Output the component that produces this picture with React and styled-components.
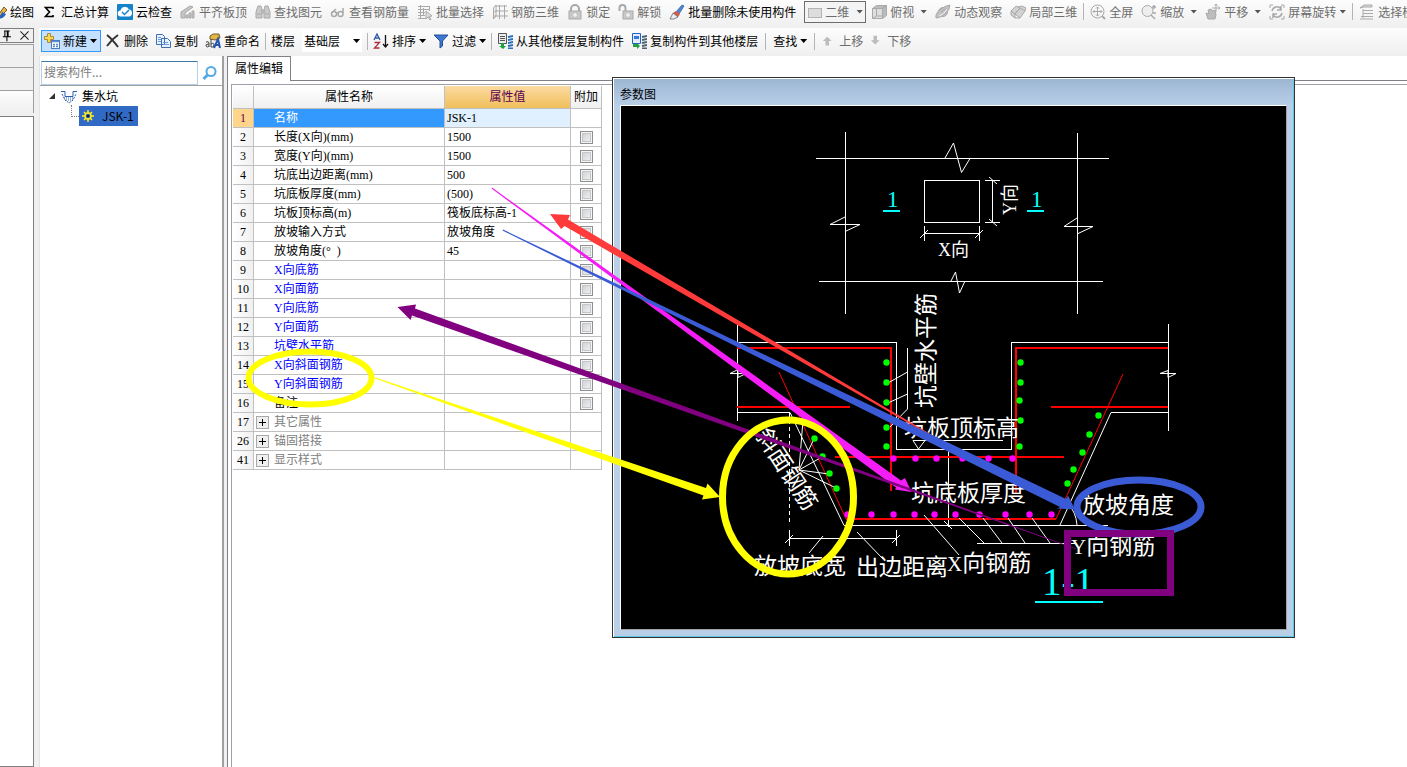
import React, { useState } from "react";
import styled, { createGlobalStyle } from "styled-components";

const GlobalStyle = createGlobalStyle`
    * {
        box-sizing: border-box;
    }
    body {
        margin: 0;
        overflow: hidden;
        background: #f0f0f0;
        font-family: "Noto Sans CJK SC", "Liberation Sans", sans-serif;
        font-size: 12px;
        line-height: 18px;
        color: #000;
    }
    button, input, select {
        font: inherit;
        color: inherit;
        margin: 0;
    }
`;

const Page = styled.div`
    position: relative;
    display: flex;
    flex-direction: column;
    height: 100vh;
    overflow: hidden;
`;

const Bar = styled.div`
    display: flex;
    align-items: center;
    height: 28px;
    white-space: nowrap;
    overflow: hidden;
    background: linear-gradient(#fdfdfd, #efefef);
`;

const ViewBar = styled(Bar)`
    gap: 8px;
    padding-bottom: 5px;
`;

const Bleed = styled.div`
    width: 1px;
    flex: none;
    margin-left: -18px;
`;

const EditBar = styled(Bar)`
    gap: 7px;
    padding-left: 2px;
    padding-bottom: 2px;
`;

const IconBox = styled.svg`
    flex: none;
`;

const ToolButton = styled.button`
    display: flex;
    align-items: center;
    flex: none;
    gap: 3px;
    height: 22px;
    padding: 0;
    border: 0;
    background: none;
    white-space: nowrap;
    color: ${(p) => (p.$dim ? "#6d6d6d" : "#000")};
`;

const NewButton = styled(ToolButton)`
    padding: 0 3px 0 2px;
    border: 1px solid #3399ff;
    background: #c4e1ff;
    margin-right: -3px;
`;

const Caret = styled.span`
    width: 7px;
    height: 4px;
    margin-left: ${(p) => (p.$wide ? 3 : 0)}px;
    background: ${(p) => (p.$dim ? "#555" : "#000")};
    clip-path: polygon(0 0, 100% 0, 50% 100%);
`;

const Separator = styled.span`
    flex: none;
    width: 1px;
    height: 17px;
    margin: 0 ${(p) => (p.$tight ? -2 : 0)}px;
    background: #b4b4b4;
`;

const Combo = styled.label`
    display: flex;
    align-items: center;
    flex: none;
    width: 60px;
    height: 22px;
    padding: 0 2px;
    gap: 2px;
    background: #fff;
`;

const ViewCombo = styled(Combo)`
    width: 62px;
    border: 1px solid #6e6e6e;
    background: #f4f4f4;
    color: #6d6d6d;
    margin-right: -3px;
`;

const Select = styled.select`
    appearance: none;
    flex: 1;
    min-width: 0;
    padding: 0;
    border: 0;
    outline: 0;
    background: none;
`;

const Main = styled.div`
    display: flex;
    flex: 1;
    min-height: 0;
`;

const Dock = styled.aside`
    width: 34px;
    margin-right: 5px;
    flex: none;
    display: flex;
    flex-direction: column;
`;

const DockHead = styled.div`
    display: flex;
    align-items: center;
    justify-content: flex-end;
    gap: 5px;
    height: 15px;
    margin-bottom: 1px;
    padding-right: 2px;
    border: 1px solid #808080;
    border-left: 0;
`;

const IconButton = styled.button`
    display: flex;
    align-items: center;
    justify-content: center;
    padding: 0;
    border: 0;
    background: none;
`;

const DockPane = styled.div`
    height: 23px;
    border: 1px solid #a0a0a0;
    border-left: 0;
    border-bottom: 0;
    background: ${(p) => (p.$light ? "linear-gradient(#fdfdfd, #efefef)" : "#f0f0f0")};
`;

const DockBody = styled.div`
    flex: 1;
    border: 1px solid #808080;
    border-left: 0;
    background: #fff;
    margin-top: 3px;
`;

const Work = styled.div`
    display: flex;
    flex-direction: column;
    flex: 1;
    min-width: 0;
`;

const Panels = styled.div`
    display: flex;
    flex: 1;
    min-height: 0;
`;

const TreePanel = styled.section`
    width: 185px;
    flex: none;
    margin-right: 3px;
    background: #fff;
    border-left: 1px solid #e4e4e4;
    border-right: 2px solid #a0a0a0;
`;

const SearchRow = styled.div`
    display: flex;
    align-items: center;
    height: 30px;
    padding-top: 4px;
    border-bottom: 1px solid #a0a0a0;
`;

const SearchBox = styled.input`
    width: 157px;
    height: 24px;
    margin-left: 1px;
    padding: 0 2px 2px;
    border: 1px solid #b5cfe7;
    border-top-color: #3d7bad;
    outline: 0;
    &::placeholder {
        color: #808080;
        opacity: 1;
    }
`;

const SearchButton = styled(IconButton)`
    flex: 1;
    height: 24px;
`;

const Tree = styled.ul`
    list-style: none;
    margin: 0;
    padding: 0 0 0 8px;
`;

const TreeNode = styled.li`
    display: flex;
    align-items: center;
    height: 20px;
    gap: 5px;
`;

const TreeLeaf = styled(TreeNode)`
    gap: 0;
    padding-left: 23px;
`;

const Elbow = styled.span`
    width: 8px;
    height: 12px;
    margin-bottom: 10px;
    border-left: 1px dotted #808080;
    border-bottom: 1px dotted #808080;
`;

const Selected = styled.span`
    display: flex;
    align-items: center;
    gap: 6px;
    height: 20px;
    padding: 0 4px 0 1px;
    background: #316ac5;
`;

const PropertyPanel = styled.section`
    display: flex;
    flex-direction: column;
    flex: 1;
    min-width: 0;
    border-left: 1px solid #808088;
    background: #fff;
`;

const TabRow = styled.div`
    display: flex;
    height: 25px;
    &::after {
        content: "";
        flex: 1;
        border-bottom: 1px solid #808088;
    }
`;

const Tab = styled.button`
    width: 63px;
    padding: 0 0 3px;
    border: 1px solid #808088;
    border-left: 0;
    border-bottom: 0;
    background: #fff;
`;

const GridFrame = styled.div`
    flex: 1;
    margin: 3px 0 0 3px;
    padding: 1px;
    border-top: 1px solid #a0a0a8;
    border-left: 1px solid #a0a0a8;
`;

const Grid = styled.table`
    width: 369px;
    table-layout: fixed;
    border-collapse: separate;
    border-spacing: 0;
    font-family: "Liberation Serif", "Noto Sans CJK SC", serif;
    line-height: 16px;
    th, td {
        height: 19px;
        padding: 0 2px;
        border-right: 1px solid #c0c0c0;
        border-bottom: 1px solid #c0c0c0;
        text-align: left;
        font-weight: normal;
        white-space: nowrap;
        overflow: hidden;
    }
`;

const ColumnHead = styled.th`
    && {
        height: 23px;
        padding: 0;
        text-align: center;
        color: ${(p) => (p.$active ? "#5a0050" : "#000")};
        background: ${(p) => (p.$active ? "linear-gradient(#fbdba2, #f1bf5b)" : "linear-gradient(#fff, #f0f0f0)")};
    }
`;

const RowHead = styled.th`
    && {
        padding: 0;
        text-align: center;
        color: ${(p) => (p.$active ? "#5a0050" : "#000")};
        background: ${(p) => (p.$active ? "#ffd58c" : "linear-gradient(90deg, #fff, #f0f0f0)")};
    }
`;

const nameColors = { plain: "#000", rebar: "#0000ff", group: "#808080", active: "#fff" };

const NameCell = styled.td`
    color: ${(p) => nameColors[p.$kind]};
    background: ${(p) => (p.$kind === "active" ? "#3399ff" : "#fff")};
`;

const NameLine = styled.div`
    display: flex;
    align-items: center;
    gap: 5px;
    padding-left: ${(p) => (p.$nested ? 18 : 0)}px;
    white-space: pre;
`;

const ValueCell = styled.td`
    background: ${(p) => (p.$active ? "#e0f0ff" : "#fff")};
`;

const CheckCell = styled.td`
    && {
        text-align: center;
        line-height: 0;
    }
`;

const Check = styled.input`
    appearance: none;
    width: 13px;
    height: 13px;
    border: 1px solid #8e8f8f;
    background: linear-gradient(135deg, #c8ccd2, #f6f6f6);
    box-shadow: inset 0 0 0 1px #f4f4f4, inset 0 0 0 2px #c4c6c8;
`;

const Expand = styled(IconButton)`
    width: 13px;
    height: 13px;
    border: 1px solid #a8a8a8;
    color: #000;
    background: #efefef;
`;

const Dialog = styled.section`
    position: absolute;
    left: 612px;
    top: 77px;
    width: 683px;
    padding: 0 7px 7px;
    border: 1px solid #333;
    background: linear-gradient(#9bb5d2, #b9cfe8 28px);
    box-shadow: inset 1px 1px 0 #fff, inset -1px -1px 0 #5cc8e8;
`;

const DialogTitle = styled.h2`
    height: 27px;
    margin: 0;
    padding-top: 7px;
    font-size: 12px;
    font-weight: normal;
`;

const Drawing = styled.svg`
    display: block;
    width: 667px;
    height: 525px;
    border: 1px solid #a0a0a0;
    border-top-color: #fff;
    border-left-color: #fff;
    background: #000;
    font-family: "Liberation Serif", "Noto Sans CJK SC", serif;
    font-size: 23px;
`;

const Markup = styled.svg`
    position: absolute;
    left: 0;
    top: 0;
    width: 100%;
    height: 100%;
    pointer-events: none;
`;

const gray = "#a9a9a9";

const icons = {
    pencil: (
        <g>
            <path d="M8 10l5-7 3 3-6 6z" fill="#e6b24c" stroke="#7a5a1c" />
            <path d="M6 14q6 2 9-4l-4-2q-1 4-5 6z" fill="#2a62b8" />
        </g>
    ),
    sigma: <path d="M11 5V3.500H3.500L7.500 8l-4 4.500H11V11" fill="none" stroke="#000" strokeWidth="1.600" />,
    cloud: (
        <g>
            <rect y="0" width="16" height="16" rx="1" fill="#1583cc" />
            <path d="M4 12.500a3 3 0 01-.5-6 4.500 4.500 0 018.500-1 3.600 3.600 0 01.5 7z" fill="#fff" />
            <path d="M5 8l2.500 2.500L12 6" fill="none" stroke="#1583cc" strokeWidth="1.500" />
        </g>
    ),
    slab: (
        <g fill="#c4c4c4" stroke={gray}>
            <path d="M1 8l9-6 3 1-8 6v5H1z" />
            <path d="M6 11h2v3H6zM9 9h2v5H9zM12 7h2v7h-2z" />
        </g>
    ),
    binoculars: (
        <g fill="#c9c9c9" stroke={gray}>
            <path d="M3 2h3l1 4v8H1V8zM10 2h3l2 6v6H9V6z" />
            <path d="M7 6h2v3H7zM2 10h4M10 10h4" />
        </g>
    ),
    glasses: (
        <g fill="none" stroke={gray} strokeWidth="1.500">
            <circle cx="4" cy="10" r="2.500" />
            <circle cx="10.500" cy="10" r="2.500" />
            <path d="M6 9h2M1.500 9L6 5M13 9V4" />
        </g>
    ),
    pick: (
        <g fill="none" stroke={gray}>
            <path d="M1 2.500h12M1 5.500h12M1 8.500h7M1 11.500h7M1 14.500h9M3.500 1v14M6.500 4v8M12.500 2v5" />
            <path d="M9 7l6 5-3 .5 2 3-1 .5-2-3-2 2z" fill="#ddd" />
        </g>
    ),
    mesh: <path d="M1.500 15V4L4 1v11zM4 2h11M4 7h12M1 12h15M7.500 1v14M12.500 1v14M1 9l4-3M1 15l3-3" fill="none" stroke={gray} />,
    lock: (
        <g fill="#c8c8c8" stroke={gray}>
            <path d="M4 7V5a4 4 0 018 0v2" fill="none" strokeWidth="2" />
            <rect x="2" y="7" width="12" height="8" />
            <path d="M8 9v4M6 11h4" stroke="#fff" />
        </g>
    ),
    unlock: (
        <g fill="#c8c8c8" stroke={gray}>
            <path d="M1.500 7V4a3 3 0 016 0v3" fill="none" strokeWidth="2" />
            <rect x="5" y="7" width="10" height="8" />
            <path d="M10 9v4M8 11h4" stroke="#fff" />
        </g>
    ),
    brush: (
        <g>
            <path d="M7 8l6-7 2 1-5 8z" fill="#4b8ad5" stroke="#295a9d" strokeWidth=".7" />
            <path d="M4 9l3-2 4 3-2 3z" fill="#d85a45" />
            <path d="M1 15l3-6 5 4q-4 3-8 2z" fill="#e8eef6" stroke="#555" strokeWidth=".7" />
        </g>
    ),
    plane: <rect x="1.500" y="4.500" width="13" height="9" fill="#ddd" stroke="#b4b4b4" />,
    cube: (
        <g fill="#dedede" stroke={gray}>
            <path d="M1.500 4.500h10v10h-10z" />
            <path d="M1.500 4.500l4-3h10l-4 3zM11.500 4.500l4-3v10l-4 3z" fill="#bbb" />
            <path d="M5.500 5v7h6M1.500 14.500l4-2.500" fill="none" />
        </g>
    ),
    orbit: (
        <g fill="#c2c2c2" stroke={gray}>
            <circle cx="8" cy="8" r="4.500" />
            <path d="M1 14Q0 9 6 5t9-4q0 5-5 9t-9 4zM6 8q3-3 6-3" />
            <path d="M4 12q5-1 8-7" stroke="#f2f2f2" fill="none" />
        </g>
    ),
    local: (
        <g fill="#d2d2d2" stroke={gray}>
            <path d="M1 7l5-5 4 2-5 6zM5 10l5-6 5 3-5 7zM1 7v4l4 3v-4M10 14l-5 0M8 3l4-1 4 2-1 3" />
        </g>
    ),
    extent: (
        <g fill="none" stroke={gray}>
            <circle cx="7.500" cy="7.500" r="6.500" />
            <path d="M12 12l3 3" strokeWidth="2" />
            <path d="M7.500 3v9M3 7.500h9M6 4.500L7.500 3 9 4.500M6 10.500L7.500 12 9 10.500M4.500 6L3 7.500 4.500 9M10.500 6L12 7.500 10.500 9" />
        </g>
    ),
    zoom: (
        <g fill="#eee" stroke={gray}>
            <circle cx="6.500" cy="7" r="5.500" />
            <path d="M10 11l4 4M13 1v4M11 3h4M12 9h3" strokeWidth="1.500" />
        </g>
    ),
    pan: (
        <g fill="#bdbdbd" stroke={gray}>
            <path d="M3 15l-2-6 3 1-1-4 3-1 1 2 3-1 1 5-1 4z" />
            <path d="M11 0v8M7 4h8M9.500 1.500L11 0l1.500 1.500M13.500 2.500L15 4l-1.500 1.500" fill="none" />
        </g>
    ),
    spin: (
        <g fill="none" stroke={gray}>
            <path d="M1 1h3M1 1v3M15 1h-3M15 1v3M1 15h3M1 15v-3M15 15h-3M15 15v-3" />
            <path d="M3 7a5 5 0 019-2M12 2v4H8M13 9a5 5 0 01-9 2M4 14v-4h4" strokeWidth="1.500" />
        </g>
    ),
    floors: <path d="M1 4l4-3h8v2H5zM4 5v9M4 6.500h10M4 9.500h10M2 12.500h12M1 15h13" fill="#ddd" stroke={gray} />,
    create: (
        <g>
            <rect x="7.500" y="7.500" width="8" height="8" fill="#fff" stroke="#4b79bd" />
            <path d="M7.500 8.500h8M9 11.500h2m1 0h2M9 13.500h2m1 0h2" stroke="#5c8bd2" strokeWidth="1.500" />
            <path d="M3.500.5h3v3h3v3h-3v3h-3v-3h-3v-3h3z" fill="#f8d94b" stroke="#a4771c" strokeWidth=".8" />
        </g>
    ),
    remove: <path d="M2 2q5 4 11 12M13 2Q7 6 2 13" fill="none" stroke="#333" strokeWidth="2" />,
    copy: (
        <g fill="#e8f1ff" stroke="#3f6fae">
            <path d="M1.500 1.500h6l2 2v8h-8zM6.500 5.500h6l3 3v6h-9z" />
            <path d="M3 4.500h3M3 6.500h3M3 8.500h3M8 9.500h5M8 11.500h6" stroke="#6d9add" />
        </g>
    ),
    rename: (
        <g>
            <path d="M5 3l3-2h6l1 4-5 2-5-1z" fill="#e3b648" stroke="#7b5b22" />
            <path d="M1 9q3-1 3 1v4M4 11q-4 0-3 2t3 0M6 6v8q3 1 3-2t-3-1" fill="none" stroke="#444" />
            <path d="M9 15l4-9 2 9M10 12h5" fill="none" stroke="#2457b4" strokeWidth="2" />
        </g>
    ),
    sort: (
        <g fill="none">
            <path d="M1 7l3-6 3 6M2 5h4" stroke="#2b59a9" strokeWidth="1.300" />
            <path d="M1.500 9.500h5L1.500 15h5" stroke="#aa2e3d" strokeWidth="1.300" />
            <path d="M12.500 2v12M10 11l2.500 3 2.500-3" stroke="#111" strokeWidth="1.300" />
        </g>
    ),
    filter: <path d="M1 2h14l-5.500 6v5L7 15V8z" fill="#3f76d2" stroke="#244f99" />,
    copyFrom: (
        <g>
            <path d="M1.500.5h8v10h-8z" fill="#ececec" stroke="#555" />
            <path d="M3 3.500h5M3 5.500h5M3 7.500h5" stroke="#555" />
            <path d="M11 4l5-1M11 7l5-1M11 10l5-1M11 13l5-1M11 15.500h5" stroke="#2871b8" strokeWidth="1.800" />
            <path d="M4 10v3H2l4 3 3-3H7v-3z" fill="#20a040" />
        </g>
    ),
    copyTo: (
        <g>
            <path d="M1.500.5h8v10h-8z" fill="#e3edff" stroke="#2461c1" />
            <path d="M3 3h5v3H3z" fill="#3678dc" />
            <path d="M11 4l5-1M11 7l5-1M11 10l5-1M11 13l5-1M11 15.500h5" stroke="#4f6274" strokeWidth="1.800" />
            <path d="M2 11v3h4v2l3-3-3-3v1z" fill="#20a040" />
        </g>
    ),
    up: <path d="M6 3l5 5H8v5H4V8H1z" fill="#bcbcbc" />,
    down: <path d="M4 2h4v5h3l-5 5-5-5h3z" fill="#bcbcbc" />,
    pin: <path d="M5 2.500h7M6 3v6M10 3v6M9 3v6M3.500 9.500h10M8.500 10v5" stroke="#000" strokeWidth="1.300" fill="none" />,
    close: <path d="M3 3l10 10M13 3L3 13" stroke="#222" strokeWidth="1.300" fill="none" />,
    search: (
        <g fill="none" stroke="#55a9e4" strokeWidth="2">
            <circle cx="9" cy="6.500" r="4.500" />
            <path d="M5.500 10L1.500 14" strokeWidth="3" />
        </g>
    ),
    pit: (
        <g fill="none" stroke="#2a5db0">
            <path d="M0 3.500h4v5h8v-5h4" />
            <path d="M1 6l3 6 4 3 4-3 3-6" strokeDasharray="2 1" />
            <path d="M3 10h10M5 12h7" strokeDasharray="1 1" />
        </g>
    ),
    gear: (
        <g fill="none" stroke="#ffee22" strokeWidth="1.500">
            <circle cx="8" cy="8" r="3" />
            <path d="M8 2v3M8 11v3M2 8h3M11 8h3M4 4l2 2M10 10l2 2M12 4l-2 2M6 10l-2 2" />
            <circle cx="8" cy="8" r="1.500" fill="#222" stroke="none" />
        </g>
    ),
};

const Icon = ({ name, size = 16 }) => (
    <IconBox width={size} height={size} viewBox="0 0 16 16" aria-hidden="true">{icons[name]}</IconBox>
);

const viewTools = [
    { icon: "pencil", text: "绘图" },
    { icon: "sigma", text: "汇总计算" },
    { icon: "cloud", text: "云检查" },
    { icon: "slab", text: "平齐板顶", dim: true },
    { icon: "binoculars", text: "查找图元", dim: true },
    { icon: "glasses", text: "查看钢筋量", dim: true },
    { icon: "pick", text: "批量选择", dim: true },
    { icon: "mesh", text: "钢筋三维", dim: true },
    { icon: "lock", text: "锁定", dim: true },
    { icon: "unlock", text: "解锁", dim: true },
    { icon: "brush", text: "批量删除未使用构件" },
];

const cameraTools = [
    { icon: "cube", text: "俯视", menu: true, wide: true },
    { icon: "orbit", text: "动态观察" },
    { icon: "local", text: "局部三维" },
    { split: true },
    { icon: "extent", text: "全屏" },
    { icon: "zoom", text: "缩放", menu: true, wide: true },
    { icon: "pan", text: "平移", menu: true, wide: true },
    { icon: "spin", text: "屏幕旋转", menu: true },
    { split: true },
    { icon: "floors", text: "选择楼层" },
];

const rows = [
    { no: 1, name: "名称", value: "JSK-1", kind: "active" },
    { no: 2, name: "长度(X向)(mm)", value: "1500" },
    { no: 3, name: "宽度(Y向)(mm)", value: "1500" },
    { no: 4, name: "坑底出边距离(mm)", value: "500" },
    { no: 5, name: "坑底板厚度(mm)", value: "(500)" },
    { no: 6, name: "坑板顶标高(m)", value: "筏板底标高-1" },
    { no: 7, name: "放坡输入方式", value: "放坡角度" },
    { no: 8, name: "放坡角度(°  )", value: "45" },
    { no: 9, name: "X向底筋", kind: "rebar" },
    { no: 10, name: "X向面筋", kind: "rebar" },
    { no: 11, name: "Y向底筋", kind: "rebar" },
    { no: 12, name: "Y向面筋", kind: "rebar" },
    { no: 13, name: "坑壁水平筋", kind: "rebar" },
    { no: 14, name: "X向斜面钢筋", kind: "rebar" },
    { no: 15, name: "Y向斜面钢筋", kind: "rebar" },
    { no: 16, name: "备注" },
    { no: 17, name: "其它属性", kind: "group" },
    { no: 26, name: "锚固搭接", kind: "group" },
    { no: 41, name: "显示样式", kind: "group" },
];

const greenDots = [
    [886, 362], [886, 382], [886, 402], [886, 427], [886, 446],
    [1020, 362], [1020, 382], [1019, 400], [1020, 420], [1019, 446],
    [803, 420], [814, 438], [822, 456], [829, 473], [836, 488],
    [1098, 415], [1089, 434], [1082, 452], [1073, 469], [1067, 483],
];

const pinkDots = [
    [893, 458], [915, 458], [936, 458], [962, 458], [988, 458], [1012, 458],
    [847, 514], [871, 514], [893, 514], [914, 514], [934, 514], [955, 514],
    [979, 514], [1005, 514], [1029, 514], [1051, 514],
];

const Dots = ({ points, color }) => (
    <g fill={color}>
        {points.map(([x, y]) => <circle key={`${x}-${y}`} cx={x + 0.5} cy={y + 0.5} r="3.2" />)}
    </g>
);

const PitDrawing = () => (
    <Drawing viewBox="621 106 665 523" role="img" aria-label="集水坑参数图">
        {/* plan */}
        <g fill="none" stroke="#fff" shapeRendering="crispEdges">
            <path d="M845.5 132V314M1077.500 133V314M816 158.500H1109M819 281.500H1103" />
            <path d="M924.500 180.500h55v42h-55z" />
            <path d="M924.500 233.500h55M924.500 226v15M979.500 226v15M992.500 180.500v42M985 180.500h15M985 222.500h15" />
            <path d="M830 224.500h30M1064 226.500h29" />
        </g>
        <g fill="none" stroke="#fff">
            <path d="M945 158l8.500-15 8 29.500 8.500-14M951 281l4.500-9 4 21 5.500-12" />
            <path d="M830 224.500l15-7.500M845 231.500l15-7M1064 226.500l13-8.500M1077 234l16-7.500" />
            <path d="M920 238l8-8M975 238l8-8M989 177l8 7M989 219l8 7" />
        </g>
        {/* section outline */}
        <g fill="none" stroke="#fff" shapeRendering="crispEdges">
            <path d="M737.500 325V421M737 342.500H896.500V449.500H1011.500V342.500H1168M1168.500 324V431" />
            <path d="M737 412.500H790M844 525.500H1108M1168 412.500H1111" />
            <path d="M907.500 348v61M948.500 449v78M913 440.500h90M977 543.500h98" />
            <path d="M789.500 538.500h107M789.500 530v16M896.500 530v16" />
            <path d="M789.500 413V524" strokeDasharray="4 3" />
        </g>
        <g fill="none" stroke="#f00" strokeWidth="2" shapeRendering="crispEdges">
            <path d="M737 348H891V491M1168 348H1016V493M737 407H850M1051 407H1168M835 457H1064M846 519H1056" />
        </g>
        <path d="M779 372L846 519M1123 374L1056 519" stroke="#f00" />
        <g fill="none" stroke="#fff">
            <path d="M790 412.500L844 525.500M1111 412.500L1060 525" />
            <path d="M730 373.500h14M730 373.500l8-4v8l6-3M1160 373.500h16M1160 373.500l8-3v7l8-4" />
            <path d="M907.500 372L888 383M907.500 394L888 403M907.500 409L890 427" />
            <path d="M913 440.500l5.500 8.500 6.500-8.500M944 446l8 7M944 521l8 8" />
            <path d="M799 470L803 420M799 470L814 439M799 470L822 457M799 470L829 474M799 470L836 488" />
            <path d="M785 543l8-8M892 543l8-8M823 536L809 553M857 532L883 559M924 515L959 555" />
            <path d="M959 518l25 25M983 518l19 25M1008 518l17 25M1032 518l18 25M1068 504q8 8 9 21" />
        </g>
        <Dots points={greenDots} color="#0f0" />
        <Dots points={pinkDots} color="#f0f" />
        <g fill="#fff">
            <text x="938" y="256" fontSize="18">X向</text>
            <text transform="translate(1016 215) rotate(-90)" fontSize="18">Y向</text>
            <text transform="translate(934 408) rotate(-90)">坑壁水平筋</text>
            <text x="904" y="436">坑板顶标高</text>
            <text x="911" y="501">坑底板厚度</text>
            <text x="1082" y="513">放坡角度</text>
            <text x="754" y="574">放坡底宽</text>
            <text x="856" y="575">出边距离</text>
            <text x="947" y="571"><tspan fontSize="21">X</tspan>向钢筋</text>
            <text x="1071" y="554"><tspan fontSize="21">Y</tspan>向钢筋</text>
            <text transform="translate(755 435) rotate(57)">斜面钢筋</text>
        </g>
        <g fill="#0ff">
            <text x="887" y="207">1</text>
            <text x="1031" y="207">1</text>
            <text x="1042" y="595" fontSize="39">1-1</text>
        </g>
        <path d="M883 211h17M1027 211h17M1035 602h68" stroke="#0ff" strokeWidth="2" />
    </Drawing>
);

const Annotations = () => (
    <Markup aria-hidden="true">
        <polygon fill="#ff3a3a" points="550,214 570,215 568,219.500 932,435 931,436 564.500,226 561,229" />
        <polygon fill="#f51df5" points="492,187.500 901,480.500 905,478 911.500,492 895,489.500 896,487.500 491.500,188.500" />
        <polygon fill="#3b5bd6" points="503,229.500 1066,499 1068,495.500 1075,509.500 1057,508.500 1060,507 502.500,230.500" />
        <polygon fill="#800080" points="397.500,307 416,304.500 415,308.500 1076,548.500 1075.500,549 412,315.500 410.500,320" />
        <polygon fill="#ff0" points="374,377 706,488 707.500,483.500 720,497 702,499.500 703.500,495.500 373.500,378" />
        <g fill="none">
            <ellipse cx="310" cy="378" rx="61.500" ry="26.500" stroke="#ff0" strokeWidth="6" />
            <ellipse cx="788" cy="497" rx="65.500" ry="77" stroke="#ff0" strokeWidth="7" />
            <ellipse cx="1139" cy="507" rx="62" ry="27" stroke="#3b5bd6" strokeWidth="7" />
            <rect x="1067.500" y="533.500" width="103" height="59" stroke="#800080" strokeWidth="7" />
        </g>
    </Markup>
);

const Tool = ({ icon, text, dim, menu, wide, small }) => (
    <ToolButton type="button" $dim={dim}>
        {icon && <Icon name={icon} size={small ? 14 : 16} />}
        {text}
        {menu && <Caret $dim={dim} $wide={wide} />}
    </ToolButton>
);

const PropertyGrid = () => {
    const [extra, setExtra] = useState({});

    return (
        <Grid>
            <colgroup>
                <col width="21" />
                <col width="191" />
                <col width="126" />
                <col width="31" />
            </colgroup>
            <thead>
                <tr>
                    <ColumnHead aria-label="序号" />
                    <ColumnHead>属性名称</ColumnHead>
                    <ColumnHead $active>属性值</ColumnHead>
                    <ColumnHead>附加</ColumnHead>
                </tr>
            </thead>
            <tbody>
                {rows.map(({ no, name, value, kind = "plain" }) => (
                    <tr key={no}>
                        <RowHead $active={kind === "active"}>{no}</RowHead>
                        <NameCell $kind={kind}>
                            <NameLine $nested={kind !== "group"}>
                                {kind === "group" && (
                                    <Expand type="button" aria-label={`展开${name}`}>
                                        <IconBox width="9" height="9"><path d="M1 4.500h7M4.500 1v7" stroke="#000" /></IconBox>
                                    </Expand>
                                )}
                                {name}
                            </NameLine>
                        </NameCell>
                        <ValueCell $active={kind === "active"}>{value}</ValueCell>
                        <CheckCell>
                            {kind !== "active" && kind !== "group" && (
                                <Check
                                    type="checkbox"
                                    aria-label={`附加${name}`}
                                    checked={!!extra[no]}
                                    onChange={(e) => setExtra({ ...extra, [no]: e.target.checked })}
                                />
                            )}
                        </CheckCell>
                    </tr>
                ))}
            </tbody>
        </Grid>
    );
};

const App = () => {
    return (
        <Page>
            <GlobalStyle />
            <ViewBar>
                <Bleed />
                {viewTools.map((t) => <Tool key={t.text} {...t} />)}
                <ViewCombo>
                    <Icon name="plane" />
                    <Select aria-label="视图"><option>二维</option></Select>
                    <Caret $dim />
                </ViewCombo>
                {cameraTools.map((t, i) => (t.split ? <Separator key={i} $tight /> : <Tool key={i} {...t} dim />))}
            </ViewBar>
            <Main>
                <Dock>
                    <DockHead>
                        <IconButton type="button" aria-label="固定"><Icon name="pin" size={13} /></IconButton>
                        <IconButton type="button" aria-label="关闭"><Icon name="close" size={13} /></IconButton>
                    </DockHead>
                    <DockPane />
                    <DockPane />
                    <DockPane $light />
                    <DockBody />
                </Dock>
                <Work>
                    <EditBar>
                        <NewButton type="button"><Icon name="create" />新建<Caret /></NewButton>
                        <Tool icon="remove" text="删除" />
                        <Tool icon="copy" text="复制" />
                        <Tool icon="rename" text="重命名" />
                        <Separator $tight />
                        <span>楼层</span>
                        <Combo>
                            <Select aria-label="楼层"><option>基础层</option></Select>
                            <Caret />
                        </Combo>
                        <Separator $tight />
                        <Tool icon="sort" text="排序" menu />
                        <Tool icon="filter" text="过滤" menu />
                        <Separator $tight />
                        <Tool icon="copyFrom" text="从其他楼层复制构件" />
                        <Tool icon="copyTo" text="复制构件到其他楼层" />
                        <Separator />
                        <Tool text="查找" menu />
                        <Separator />
                        <Tool icon="up" text="上移" small dim />
                        <Tool icon="down" text="下移" small dim />
                    </EditBar>
                    <Panels>
                        <TreePanel>
                            <SearchRow>
                                <SearchBox type="text" placeholder="搜索构件..." aria-label="搜索构件" />
                                <SearchButton type="button" aria-label="搜索"><Icon name="search" /></SearchButton>
                            </SearchRow>
                            <Tree>
                                <TreeNode>
                                    <IconBox width="8" height="8"><path d="M7 1v6H1z" fill="#333" /></IconBox>
                                    <Icon name="pit" />
                                    集水坑
                                </TreeNode>
                                <TreeLeaf>
                                    <Elbow />
                                    <Selected><Icon name="gear" />JSK-1</Selected>
                                </TreeLeaf>
                            </Tree>
                        </TreePanel>
                        <PropertyPanel>
                            <TabRow><Tab type="button">属性编辑</Tab></TabRow>
                            <GridFrame><PropertyGrid /></GridFrame>
                        </PropertyPanel>
                    </Panels>
                </Work>
            </Main>
            <Dialog>
                <DialogTitle>参数图</DialogTitle>
                <PitDrawing />
            </Dialog>
            <Annotations />
        </Page>
    );
};

export default App;
